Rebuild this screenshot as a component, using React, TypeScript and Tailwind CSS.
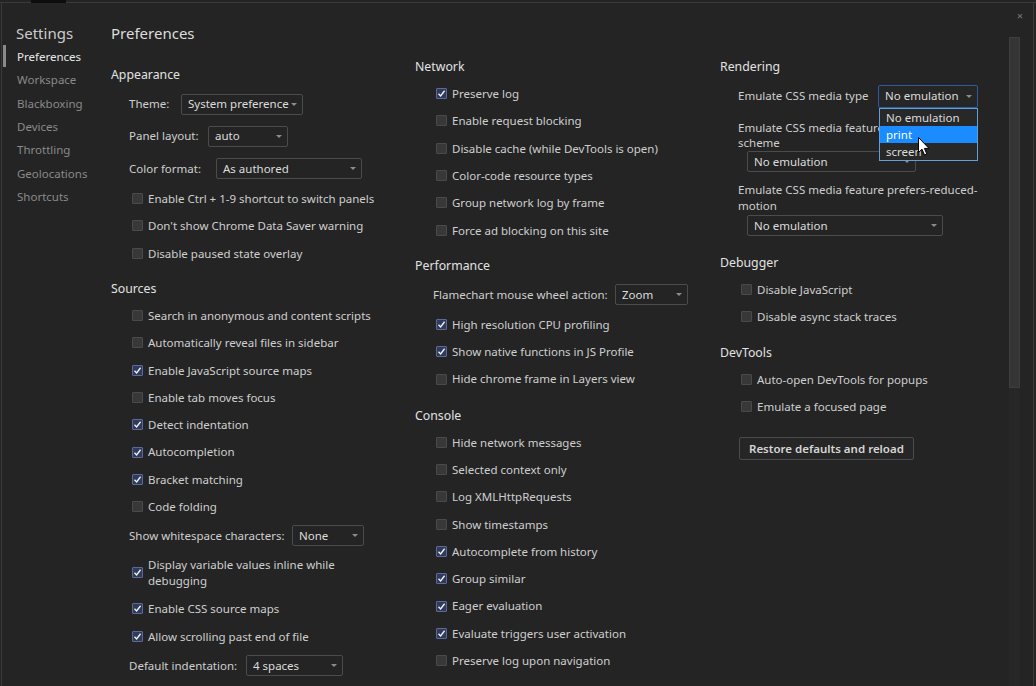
import React from "react";

const Box = ({ checked }: { checked?: boolean }) =>
  checked ? (
    <span className="w-[11px] h-[11px] shrink-0 rounded-[1px] border border-[#5b6b95] bg-[#2f3a5c] flex items-center justify-center">
      <svg width="9" height="9" viewBox="0 0 9 9">
        <path d="M1.5 4.8 L3.6 6.9 L7.6 1.8" fill="none" stroke="#f2f2f2" strokeWidth="1.4" />
      </svg>
    </span>
  ) : (
    <span className="w-[11px] h-[11px] shrink-0 rounded-[1px] border border-[#4a4a4a] bg-[#383838]" />
  );

const CheckRow = ({ label, checked }: { label: string; checked?: boolean }) => (
  <div className="h-[27.3px] flex items-center pl-[21px]">
    <Box checked={checked} />
    <span className="ml-[5px] text-[11.5px] text-[#cfcfcf] whitespace-nowrap">{label}</span>
  </div>
);

const Title = ({ text, mt = "" }: { text: string; mt?: string }) => (
  <div className={`h-[25px] flex items-center text-[12.3px] text-[#e2e2e2] ${mt}`}>{text}</div>
);

const Select = ({ value, w, focus }: { value: string; w: string; focus?: boolean }) => (
  <div
    className={`${w} h-[21px] shrink-0 rounded-[2px] border flex items-center justify-between pl-[6px] pr-[5px] text-[11.5px] text-[#dcdcdc] ${
      focus ? "border-[#2e5aa0] bg-[#262626] h-[23px]" : "border-[#4b4b4b] bg-[#242424]"
    }`}
  >
    <span className="whitespace-nowrap">{value}</span>
    <svg width="6" height="3" viewBox="0 0 6 3">
      <path d="M0 0 L6 0 L3 3 Z" fill="#8c8c8c" />
    </svg>
  </div>
);

const SelectRow = ({ label, lw, value, w, h }: { label: string; lw: string; value: string; w: string; h: string }) => (
  <div className={`${h} flex items-center pl-[18px]`}>
    <span className={`${lw} shrink-0 text-[11.5px] text-[#cfcfcf] whitespace-nowrap`}>{label}</span>
    <Select value={value} w={w} />
  </div>
);

const nav = ["Workspace", "Blackboxing", "Devices", "Throttling", "Geolocations", "Shortcuts"];

export default function App() {
  return (
    <div className="w-[1036px] h-[686px] bg-[#242424] font-['Noto_Sans','DejaVu_Sans',sans-serif] relative overflow-hidden">
      {/* frame */}
      <div className="absolute left-0 right-0 top-[2px] h-px bg-[#3a3a3a]" />
      <div className="absolute left-[31px] w-[35px] top-0 h-[3px] bg-[#0d0d0d]" />
      <div className="absolute left-[1px] top-[2px] bottom-0 w-px bg-[#3a3a3a]" />
      <div className="absolute right-[2px] top-[2px] bottom-0 w-px bg-[#3a3a3a]" />
      <div className="absolute right-[13px] top-[10px] text-[11px] text-[#7a7a7a] leading-none">×</div>

      <div className="flex h-full">
        {/* sidebar */}
        <div className="w-[111px] shrink-0 pt-[21px] relative">
          <div className="pl-[16px] h-[24px] flex items-center text-[15px] text-[#cccccc]">Settings</div>
          <div className="relative h-[23.3px] flex items-center pl-[17px] text-[11.5px] text-[#e8e8e8]">
            <span className="absolute left-[3px] top-[0px] w-[3px] h-[22px] bg-[#8a8a8a]" />
            Preferences
          </div>
          {nav.map((n) => (
            <div key={n} className="h-[23.3px] flex items-center pl-[17px] text-[11.5px] text-[#8a8a8a]">
              {n}
            </div>
          ))}
        </div>

        {/* content */}
        <div className="flex-1 pt-[21px]">
          <div className="h-[24px] flex items-center text-[15px] text-[#dddddd]">Preferences</div>
          <div className="flex">
            {/* column 1 */}
            <div className="w-[304px] shrink-0 pt-[18px]">
              <Title text="Appearance" />
              <SelectRow label="Theme:" lw="w-[52px]" value="System preference" w="w-[122px]" h="h-[32px]" />
              <SelectRow label="Panel layout:" lw="w-[79px]" value="auto" w="w-[80px]" h="h-[32px]" />
              <SelectRow label="Color format:" lw="w-[87px]" value="As authored" w="w-[146px]" h="h-[33px]" />
              <CheckRow label="Enable Ctrl + 1-9 shortcut to switch panels" />
              <CheckRow label="Don't show Chrome Data Saver warning" />
              <CheckRow label="Disable paused state overlay" />
              <Title text="Sources" mt="mt-[10px]" />
              <CheckRow label="Search in anonymous and content scripts" />
              <CheckRow label="Automatically reveal files in sidebar" />
              <CheckRow label="Enable JavaScript source maps" checked />
              <CheckRow label="Enable tab moves focus" />
              <CheckRow label="Detect indentation" checked />
              <CheckRow label="Autocompletion" checked />
              <CheckRow label="Bracket matching" checked />
              <CheckRow label="Code folding" />
              <SelectRow label="Show whitespace characters:" lw="w-[163px]" value="None" w="w-[72px]" h="h-[30px]" />
              <div className="h-[45px] flex items-center pl-[21px]">
                <Box checked />
                <span className="ml-[5px] text-[11.5px] leading-[16px] text-[#cfcfcf]">
                  Display variable values inline while
                  <br />
                  debugging
                </span>
              </div>
              <CheckRow label="Enable CSS source maps" checked />
              <CheckRow label="Allow scrolling past end of file" checked />
              <SelectRow label="Default indentation:" lw="w-[117px]" value="4 spaces" w="w-[97px]" h="h-[31px]" />
            </div>

            {/* column 2 */}
            <div className="w-[305px] shrink-0 pt-[10px]">
              <Title text="Network" />
              <CheckRow label="Preserve log" checked />
              <CheckRow label="Enable request blocking" />
              <CheckRow label="Disable cache (while DevTools is open)" />
              <CheckRow label="Color-code resource types" />
              <CheckRow label="Group network log by frame" />
              <CheckRow label="Force ad blocking on this site" />
              <Title text="Performance" mt="mt-[10px]" />
              <SelectRow label="Flamechart mouse wheel action:" lw="w-[182px]" value="Zoom" w="w-[73px]" h="h-[32px]" />
              <CheckRow label="High resolution CPU profiling" checked />
              <CheckRow label="Show native functions in JS Profile" checked />
              <CheckRow label="Hide chrome frame in Layers view" />
              <Title text="Console" mt="mt-[11px]" />
              <CheckRow label="Hide network messages" />
              <CheckRow label="Selected context only" />
              <CheckRow label="Log XMLHttpRequests" />
              <CheckRow label="Show timestamps" />
              <CheckRow label="Autocomplete from history" checked />
              <CheckRow label="Group similar" checked />
              <CheckRow label="Eager evaluation" checked />
              <CheckRow label="Evaluate triggers user activation" checked />
              <CheckRow label="Preserve log upon navigation" />
            </div>

            {/* column 3 */}
            <div className="w-[289px] shrink-0 pt-[10px] relative">
              <Title text="Rendering" />
              <div className="h-[32px] flex items-center pl-[18px]">
                <span className="w-[140px] shrink-0 text-[11.5px] text-[#cfcfcf] whitespace-nowrap">Emulate CSS media type</span>
                <Select value="No emulation" w="w-[100px]" focus />
              </div>
              <div className="pl-[18px] pt-[8px] text-[11.5px] leading-[15px] text-[#cfcfcf] whitespace-nowrap">
                Emulate CSS media feature prefers-color-
                <br />
                scheme
              </div>
              <div className="pl-[27px] mt-[1px]">
                <Select value="No emulation" w="w-[169px]" />
              </div>
              <div className="pl-[18px] pt-[10px] text-[11.5px] leading-[15.5px] text-[#cfcfcf] whitespace-nowrap">
                Emulate CSS media feature prefers-reduced-
                <br />
                motion
              </div>
              <div className="pl-[27px] mt-[2px]">
                <Select value="No emulation" w="w-[196px]" />
              </div>
              <Title text="Debugger" mt="mt-[15px]" />
              <CheckRow label="Disable JavaScript" />
              <CheckRow label="Disable async stack traces" />
              <Title text="DevTools" mt="mt-[10px]" />
              <CheckRow label="Auto-open DevTools for popups" />
              <CheckRow label="Emulate a focused page" />
              <div className="pl-[19px] mt-[15px]">
                <button className="h-[23px] px-[9px] rounded-[2px] border border-[#4b4b4b] bg-[#262626] text-[11.5px] font-semibold text-[#d6d6d6]">
                  Restore defaults and reload
                </button>
              </div>

              {/* open dropdown */}
              <div className="absolute left-[159px] top-[63px] w-[99px] border border-[#5fa0d8] bg-[#282828] text-[11.5px] text-[#dcdcdc]">
                <div className="h-[17px] flex items-center pl-[6px]">No emulation</div>
                <div className="h-[17px] flex items-center pl-[6px] bg-[#1a8cff] text-white">print</div>
                <div className="h-[17px] flex items-center pl-[6px]">screen</div>
              </div>
              <svg className="absolute left-[198px] top-[92px]" width="13" height="20" viewBox="0 0 13 20">
                <path d="M0.5 0.5 L0.5 15.5 L4 12.2 L6.5 18 L8.8 17 L6.4 11.4 L11 11.4 Z" fill="#ffffff" stroke="#000000" strokeWidth="1" />
              </svg>
            </div>

            {/* scrollbar */}
            <div className="w-[11px] shrink-0 -mt-[8px] h-[650px] bg-[#272727]">
              <div className="h-[351px] border border-[#3e3e3e] bg-[#353535]" />
            </div>
          </div>
        </div>
      </div>
    </div>
  );
}
